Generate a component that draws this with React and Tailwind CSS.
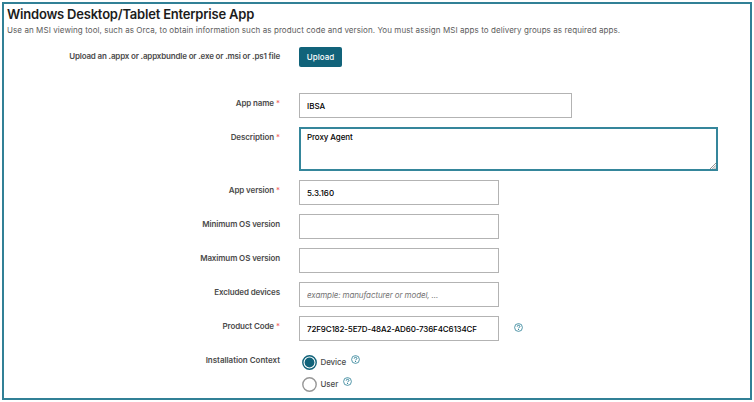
import React from "react";

function Row({ label, required, tracking = "tracking-[-0.12px]", className = "", children }) {
  return (
    <div className={`flex items-start ${className}`}>
      <div className={`w-[276px] shrink-0 pt-[4px] text-right text-[8px] leading-[12px] font-semibold whitespace-nowrap text-[#4b4b4b] ${tracking}`}>
        {label}
        {required && <span className="ml-[2px] font-normal tracking-normal text-[#f0605f]">*</span>}
      </div>
      <div className="ml-[19px] flex">{children}</div>
    </div>
  );
}

function Field({ value, placeholder, width, tracking = "" }) {
  return (
    <input
      type="text"
      defaultValue={value}
      placeholder={placeholder}
      className={`h-[25px] rounded-none border border-[#b3b3b3] bg-white pl-[7px] text-[8px] leading-[12px] font-medium text-black outline-none placeholder:font-normal placeholder:text-[#757575] placeholder:italic ${width} ${tracking}`}
    />
  );
}

function Help({ className }) {
  return (
    <svg viewBox="0 0 9 9" className={`h-[9px] w-[9px] shrink-0 ${className}`} fill="none" stroke="#2b7f96">
      <circle cx="4.5" cy="4.5" r="3.9" strokeWidth="0.8" />
      <path d="M3.2 3.6c0-1.8 2.7-1.7 2.7 0 0 .9-1.35.8-1.35 1.7" strokeWidth="1" />
      <path d="M4.55 6v1" strokeWidth="1" />
    </svg>
  );
}

function Radio({ label, checked }) {
  return (
    <div className="flex h-[22px] items-center">
      <svg viewBox="0 0 15 15" className="ml-[3px] h-[15px] w-[15px]" fill="none">
        <circle cx="7.5" cy="7.5" r="6.7" stroke={checked ? "#11637a" : "#969696"} strokeWidth="1.4" />
        {checked && <circle cx="7.5" cy="7.5" r="4.9" fill="#11637a" />}
      </svg>
      <span className="ml-[3.5px] text-[8px] leading-[12px] font-medium tracking-[-0.1px] text-[#4b4b4b]">{label}</span>
      <Help className="mb-[5px] ml-[5px]" />
    </div>
  );
}

export default function App() {
  return (
    <div className="h-[402px] w-[754px] bg-white px-[2px] pt-[2px] font-['Inter','Liberation_Sans',sans-serif]">
      <main className="h-[398px] w-[750px] border-2 border-[#318096] pt-[1px]">
        <h1 className="ml-[3px] h-[18px] text-[13px] leading-[18px] font-semibold tracking-[-0.21px] whitespace-nowrap text-[#1c1c1c]">Windows Desktop/Tablet Enterprise App</h1>
        <p className="ml-[3px] h-[12px] text-[8px] leading-[14px] tracking-[0.08px] whitespace-nowrap text-[#5c5c5c]">
          Use an MSI viewing tool, such as Orca, to obtain information such as product code and version. You must assign MSI apps to delivery groups as required apps.
        </p>
        <Row className="mt-[11px] h-[47px]" label="Upload an .appx or .appxbundle or .exe or .msi or .ps1 file" tracking="tracking-[-0.17px]">
          <button className="mt-px h-[20px] w-[43px] rounded-[2px] bg-[#11637a] text-[8px] leading-[20px] font-medium text-white">Upload</button>
        </Row>
        <Row className="h-[34px]" label="App name" required><Field value="IBSA" width="w-[273px]" /></Row>
        <Row className="h-[53px]" label="Description" required>
          <div className="relative h-[44px] w-[419px]">
            <textarea defaultValue="Proxy Agent" className="block h-[44px] w-[419px] resize-none rounded-none border-2 border-[#35869b] bg-white py-[2px] pl-[6px] text-[8px] leading-[12px] font-medium tracking-[-0.1px] text-black outline-none" />
            <svg viewBox="0 0 6 6" className="absolute right-[2px] bottom-[2px] h-[6px] w-[6px]" stroke="#777" strokeWidth="0.8">
              <path d="M0 6 6 0M2.3 6 6 2.3M4.5 6 6 4.5" />
            </svg>
          </div>
        </Row>
        <Row className="h-[34px]" label="App version" required><Field value="5.3.160" width="w-[200px]" /></Row>
        <Row className="h-[34px]" label="Minimum OS version"><Field width="w-[200px]" /></Row>
        <Row className="h-[34px]" label="Maximum OS version"><Field width="w-[200px]" /></Row>
        <Row className="h-[34px]" label="Excluded devices"><Field placeholder="example: manufacturer or model, ..." width="w-[200px]" tracking="tracking-[-0.11px]" /></Row>
        <Row className="h-[34px]" label="Product Code" required>
          <Field value="72F9C182-5E7D-48A2-AD60-736F4C6134CF" width="w-[200px]" tracking="tracking-[-0.14px]" />
          <Help className="mt-[6.5px] ml-[15px]" />
        </Row>
        <Row label="Installation Context" tracking="tracking-[-0.03px]">
          <div className="pt-px">
            <Radio label="Device" checked />
            <Radio label="User" />
          </div>
        </Row>
      </main>
    </div>
  );
}
